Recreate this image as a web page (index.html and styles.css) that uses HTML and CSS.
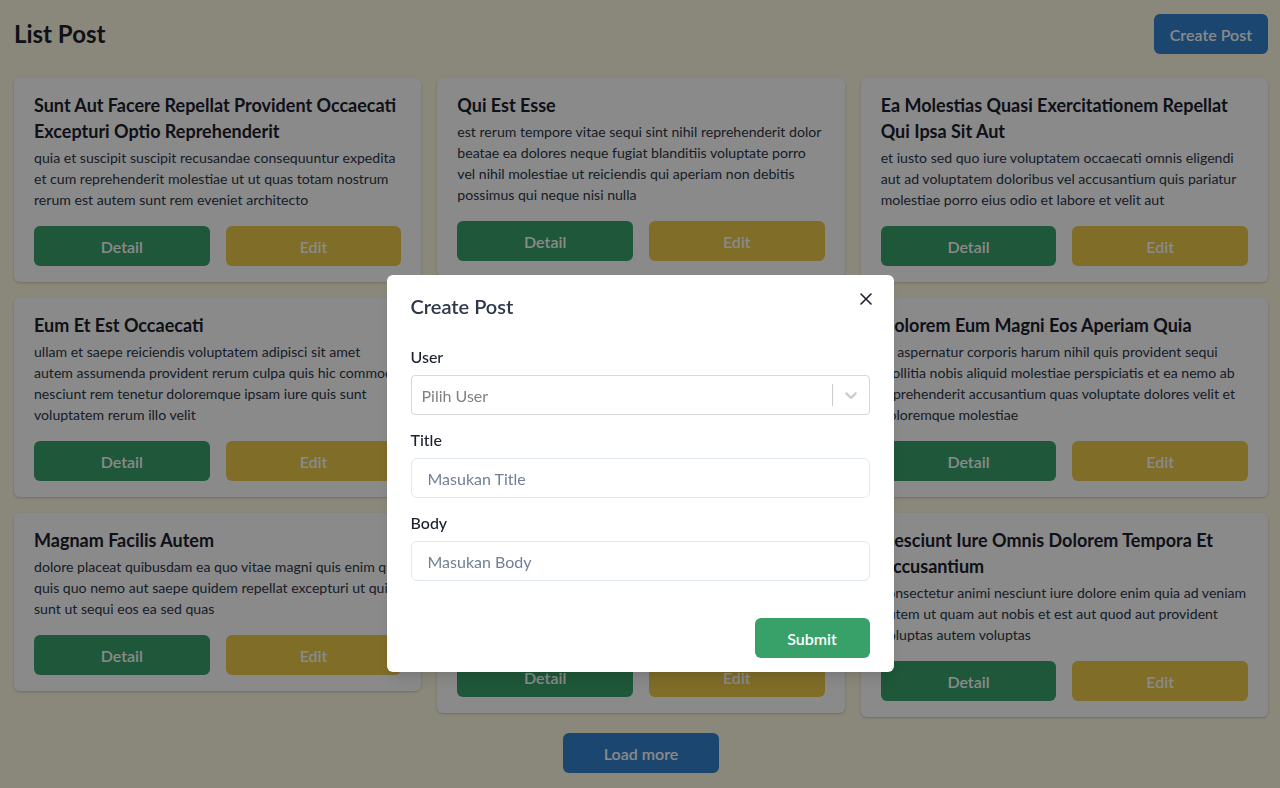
FILE: index.html
```html
<!DOCTYPE html>
<html lang="id">
<head>
<meta charset="utf-8">
<title>List Post</title>
<link rel="stylesheet" href="styles.css">
</head>
<body>
<div class="page">
  <header class="topbar">
    <h1 class="page-title">List Post</h1>
    <button class="btn btn-blue btn-create">Create Post</button>
  </header>

  <div class="masonry">
    <div class="col">
      <div class="card">
        <h2 class="card-title">Sunt Aut Facere Repellat Provident Occaecati Excepturi Optio Reprehenderit</h2>
        <p class="card-body">quia et suscipit suscipit recusandae consequuntur expedita et cum reprehenderit molestiae ut ut quas totam nostrum rerum est autem sunt rem eveniet architecto</p>
        <div class="card-actions"><button class="btn btn-green">Detail</button><button class="btn btn-yellow">Edit</button></div>
      </div>
      <div class="card">
        <h2 class="card-title">Eum Et Est Occaecati</h2>
        <p class="card-body">ullam et saepe reiciendis voluptatem adipisci sit amet autem assumenda provident rerum culpa quis hic commodi nesciunt rem tenetur doloremque ipsam iure quis sunt voluptatem rerum illo velit</p>
        <div class="card-actions"><button class="btn btn-green">Detail</button><button class="btn btn-yellow">Edit</button></div>
      </div>
      <div class="card">
        <h2 class="card-title">Magnam Facilis Autem</h2>
        <p class="card-body">dolore placeat quibusdam ea quo vitae magni quis enim qui quis quo nemo aut saepe quidem repellat excepturi ut quia sunt ut sequi eos ea sed quas</p>
        <div class="card-actions"><button class="btn btn-green">Detail</button><button class="btn btn-yellow">Edit</button></div>
      </div>
    </div>
    <div class="col">
      <div class="card">
        <h2 class="card-title">Qui Est Esse</h2>
        <p class="card-body">est rerum tempore vitae sequi sint nihil reprehenderit dolor beatae ea dolores neque fugiat blanditiis voluptate porro vel nihil molestiae ut reiciendis qui aperiam non debitis possimus qui neque nisi nulla</p>
        <div class="card-actions"><button class="btn btn-green">Detail</button><button class="btn btn-yellow">Edit</button></div>
      </div>
      <div class="card">
        <h2 class="card-title">Nesciunt Quas Odio</h2>
        <p class="card-body">repudiandae veniam quaerat sunt sed alias aut fugiat sit autem sed est voluptatem omnis possimus esse voluptatibus quis est aut tenetur dolor neque</p>
        <div class="card-actions"><button class="btn btn-green">Detail</button><button class="btn btn-yellow">Edit</button></div>
      </div>
      <div class="card card-tall">
        <h2 class="card-title">Dolorem Dolore Est Ipsam</h2>
        <p class="card-body">dignissimos aperiam dolorem qui eum facilis quibusdam animi sint suscipit qui sint possimus cum quaerat magni maiores excepturi ipsam ut commodi dolor voluptatum modi aut vitae</p>
        <div class="card-actions"><button class="btn btn-green">Detail</button><button class="btn btn-yellow">Edit</button></div>
      </div>
    </div>
    <div class="col">
      <div class="card">
        <h2 class="card-title">Ea Molestias Quasi Exercitationem Repellat Qui Ipsa Sit Aut</h2>
        <p class="card-body">et iusto sed quo iure voluptatem occaecati omnis eligendi aut ad voluptatem doloribus vel accusantium quis pariatur molestiae porro eius odio et labore et velit aut</p>
        <div class="card-actions"><button class="btn btn-green">Detail</button><button class="btn btn-yellow">Edit</button></div>
      </div>
      <div class="card">
        <h2 class="card-title">Dolorem Eum Magni Eos Aperiam Quia</h2>
        <p class="card-body">ut aspernatur corporis harum nihil quis provident sequi mollitia nobis aliquid molestiae perspiciatis et ea nemo ab reprehenderit accusantium quas voluptate dolores velit et doloremque molestiae</p>
        <div class="card-actions"><button class="btn btn-green">Detail</button><button class="btn btn-yellow">Edit</button></div>
      </div>
      <div class="card">
        <h2 class="card-title">Nesciunt Iure Omnis Dolorem Tempora Et Accusantium</h2>
        <p class="card-body">consectetur animi nesciunt iure dolore enim quia ad veniam autem ut quam aut nobis et est aut quod aut provident voluptas autem voluptas</p>
        <div class="card-actions"><button class="btn btn-green">Detail</button><button class="btn btn-yellow">Edit</button></div>
      </div>
    </div>
  </div>

  <div class="more-row"><button class="btn btn-blue btn-more">Load more</button></div>
</div>

<div class="overlay">
  <div class="modal">
    <div class="modal-header">
      <h3 class="modal-title">Create Post</h3>
      <button class="close-btn" aria-label="Close">
        <svg width="12" height="12" viewBox="0 0 12 12"><path d="M1 1 L11 11 M11 1 L1 11" stroke="#1a202c" stroke-width="1.6" stroke-linecap="round"/></svg>
      </button>
    </div>
    <div class="modal-body">
      <div class="field">
        <label class="field-label">User</label>
        <div class="select">
          <span class="select-placeholder">Pilih User</span>
          <span class="select-sep"></span>
          <span class="select-ind">
            <svg width="20" height="20" viewBox="0 0 20 20"><path fill="#cccccc" d="M4.516 7.548c0.436-0.446 1.043-0.481 1.576 0l3.908 3.747 3.908-3.747c0.533-0.481 1.141-0.446 1.574 0 0.436 0.445 0.408 1.197 0 1.615-0.406 0.418-4.695 4.502-4.695 4.502-0.217 0.223-0.502 0.335-0.787 0.335s-0.57-0.112-0.789-0.335c0 0-4.287-4.084-4.695-4.502s-0.436-1.17 0-1.615z"/></svg>
          </span>
        </div>
      </div>
      <div class="field">
        <label class="field-label">Title</label>
        <input class="input" type="text" placeholder="Masukan Title">
      </div>
      <div class="field">
        <label class="field-label">Body</label>
        <input class="input" type="text" placeholder="Masukan Body">
      </div>
    </div>
    <div class="modal-footer">
      <button class="btn btn-submit">Submit</button>
    </div>
  </div>
</div>
</body>
</html>
```

FILE: styles.css
```css
* { box-sizing: border-box; }
html, body { margin: 0; padding: 0; }
body {
  font-family: "Lato", "Noto Sans", sans-serif;
  background: #fffbe2;
  color: #1a202c;
  height: 788px;
  overflow: hidden;
}
.page {
  padding: 14px 12px 0 14px;
}
.topbar {
  display: flex;
  justify-content: space-between;
  align-items: center;
  height: 40px;
  margin-bottom: 24px;
}
.page-title {
  margin: 0;
  font-size: 24px;
  font-weight: 700;
  line-height: 40px;
}
.btn {
  font-family: inherit;
  border: none;
  border-radius: 6px;
  height: 40px;
  font-size: 16px;
  font-weight: 600;
  color: #fff;
  cursor: pointer;
  padding: 0 16px;
}
.btn-blue { background: #3182ce; }
.btn-green { background: #38a169; }
.btn-yellow { background: #ecc94b; }
.masonry {
  display: flex;
  gap: 16px;
  align-items: flex-start;
}
.col {
  flex: 1 1 0;
  min-width: 0;
  display: flex;
  flex-direction: column;
  gap: 16px;
}
.card {
  background: #fff;
  border-radius: 6px;
  box-shadow: 0 1px 3px rgba(0,0,0,0.12), 0 1px 2px rgba(0,0,0,0.08);
  padding: 14px 20px 16px;
  display: flex;
  flex-direction: column;
}
.card-tall { min-height: 226px; }
.card-title {
  margin: 0;
  font-size: 18px;
  font-weight: 700;
  line-height: 26px;
  color: #1a202c;
}
.card-body {
  margin: 3px 0 0;
  font-size: 14.1px;
  line-height: 21px;
  color: #2d3748;
}
.card-actions {
  display: flex;
  gap: 16px;
  margin-top: auto;
  padding-top: 16px;
}
.card-actions .btn { flex: 1 1 0; }
.more-row {
  display: flex;
  justify-content: center;
  margin-top: 16px;
}
.btn-more { width: 156px; }

.overlay {
  position: fixed;
  inset: 0;
  background: rgba(0,0,0,0.46);
  display: flex;
  justify-content: center;
  align-items: flex-start;
  padding-top: 275px;
}
.modal {
  width: 507px;
  background: #fff;
  border-radius: 6px;
  box-shadow: 0 10px 15px -3px rgba(0,0,0,0.1), 0 4px 6px -2px rgba(0,0,0,0.05);
  position: relative;
}
.modal-header {
  padding: 15px 24px 17px;
}
.modal-title {
  margin: 0;
  font-size: 20px;
  font-weight: 600;
  line-height: 32px;
  color: #2d3748;
}
.close-btn {
  position: absolute;
  top: 8px;
  right: 12px;
  width: 32px;
  height: 32px;
  border: none;
  background: transparent;
  border-radius: 6px;
  display: flex;
  align-items: center;
  justify-content: center;
  padding: 0;
}
.modal-body {
  padding: 8px 24px 0;
}
.field + .field { margin-top: 15px; }
.field-label {
  display: block;
  font-size: 16px;
  font-weight: 500;
  line-height: 20px;
  margin-bottom: 8px;
  color: #1a202c;
}
.select {
  height: 40px;
  border: 1px solid #d6d6dc;
  border-radius: 4px;
  display: flex;
  align-items: center;
  background: #fff;
}
.select-placeholder {
  flex: 1;
  padding-left: 10px;
  font-size: 16px;
  color: #808080;
}
.select-sep {
  width: 1px;
  align-self: stretch;
  margin: 8px 0;
  background: #cccccc;
}
.select-ind {
  padding: 8px;
  display: flex;
}
.input {
  display: block;
  width: 100%;
  height: 40px;
  border: 1px solid #e2e8f0;
  border-radius: 6px;
  padding: 0 16px;
  font-family: inherit;
  font-size: 16px;
  color: #1a202c;
  background: #fff;
  outline: none;
}
.input::placeholder { color: #718096; opacity: 1; }
.modal-footer {
  display: flex;
  justify-content: flex-end;
  padding: 37px 24px 14px;
}
.btn-submit {
  background: #38a169;
  width: 115px;
}
```
